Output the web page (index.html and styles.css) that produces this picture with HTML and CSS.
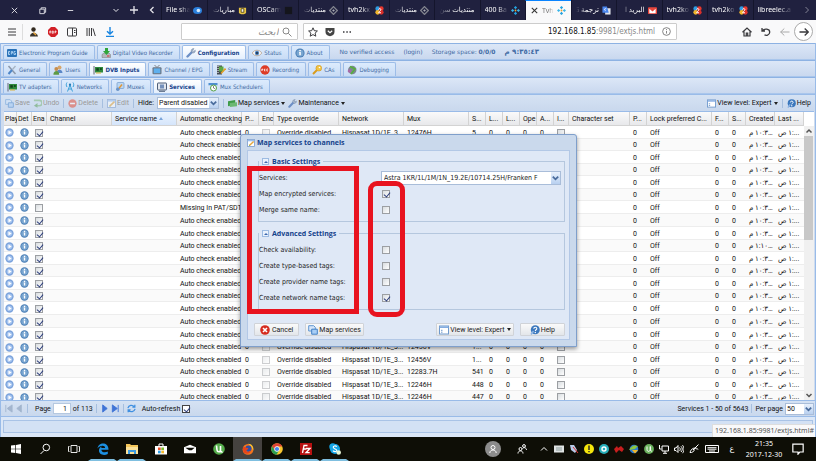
FILE: index.html
```html
<!DOCTYPE html>
<html lang="en">
<head>
<meta charset="utf-8">
<title>Tvheadend</title>
<link rel="stylesheet" href="styles.css">
</head>
<body>
<svg class="sprite" aria-hidden="true">
  <symbol id="i-chev" viewBox="0 0 10 10"><path d="M2 3.5 5 6.5 8 3.5" fill="none" stroke="#4a6c9c" stroke-width="2"/></symbol>
  <symbol id="i-play" viewBox="0 0 10 10"><circle cx="5" cy="5" r="4.6" fill="#7ba3dc"/><circle cx="5" cy="5" r="3.1" fill="#a5c4ef"/><path d="M3.8 2.7 7.4 5 3.8 7.3z" fill="#fff"/></symbol>
  <symbol id="i-info" viewBox="0 0 10 10"><circle cx="5" cy="5" r="4.6" fill="#4a7db4"/><circle cx="5" cy="5" r="3.6" fill="#78a5d0"/><path d="M4.3 2h1.5v1.3H4.3zM4 4h1.8v3.2H4.3V4.7H4z" fill="#fff"/></symbol>
  <symbol id="i-epg" viewBox="0 0 10 10"><rect y="1" width="10" height="8" rx="1" fill="#2a72b8"/><path d="M1.5 3.5v3M1.500 3.500h1.500M1.500 5h1M1.500 6.500h1.500M4.300 6.500v-3h1.200v1.600H4.300M8.500 3.500H7v3h1.500V5" stroke="#bfe0fb" stroke-width=".8" fill="none"/></symbol>
  <symbol id="i-dvr" viewBox="0 0 10 10"><path d="M1 6.500 3 5h5l1.500 1.500V9.500H1z" fill="#b4b8bd" stroke="#777" stroke-width=".5"/><path d="M4 0h3v3h2L5.500 7 2 3h2z" fill="#2fa53a"/><path d="M6 8h2.500" stroke="#d33" stroke-width="1"/></symbol>
  <symbol id="i-wrench" viewBox="0 0 10 10"><path d="M1.500 8.500 6 4" stroke="#6d8fc6" stroke-width="2.400" stroke-linecap="round"/><path d="M5.200 3.200C5 1.500 6.500.3 8 .7L6.700 2.200l1 1.200 1.600-1.200C9.700 4 8 5.500 6.200 4.800z" fill="#a9b9cf" stroke="#6b7f9d" stroke-width=".5"/></symbol>
  <symbol id="i-eye" viewBox="0 0 10 10"><path d="M.3 5C2.500 1.300 7.500 1.300 9.700 5 7.500 8.700 2.500 8.700.3 5z" fill="#fff" stroke="#a98f78" stroke-width=".7"/><circle cx="5" cy="5" r="2.200" fill="#4f83bd"/><circle cx="5" cy="5" r=".9" fill="#123"/></symbol>
  <symbol id="i-tools" viewBox="0 0 10 10"><path d="m1.500 1 7 8" stroke="#8b98aa" stroke-width="1.500"/><path d="M8.500 1 5 5" stroke="#a7b4c4" stroke-width="1.300"/><path d="M5 5 1.500 9" stroke="#4e86c8" stroke-width="2"/></symbol>
  <symbol id="i-users" viewBox="0 0 10 10"><circle cx="6.500" cy="2.500" r="2" fill="#d6a66b"/><path d="M3.500 8c0-4.500 6-4.500 6 0z" fill="#5b87c7"/><circle cx="3.300" cy="4" r="1.900" fill="#c58c4b"/><path d="M.4 9.700c0-5 5.800-5 5.800 0z" fill="#5d9a45"/></symbol>
  <symbol id="i-card" viewBox="0 0 10 10"><path d="M1 1v8.500" stroke="#667" stroke-width="1"/><rect x="2" y="2" width="8" height="5.500" fill="#2f8a3c"/><rect x="3.300" y="3.200" width="2.500" height="2.500" fill="#123f1b"/><rect x="7" y="3.200" width="1.800" height="1.600" fill="#123f1b"/><path d="M3 8h5" stroke="#d9b23c" stroke-width="1"/></symbol>
  <symbol id="i-tv" viewBox="0 0 10 10"><path d="m2.500 0 2.500 2.500L7.500 0" stroke="#666" fill="none" stroke-width=".8"/><rect x=".5" y="2.300" width="9" height="7" rx="1" fill="#6c7684"/><rect x="1.700" y="3.400" width="6.600" height="4.800" fill="#5fb0ee"/></symbol>
  <symbol id="i-film" viewBox="0 0 10 10"><rect x="1" y=".5" width="5" height="9" fill="#454b52"/><path d="M2 1.500h.01M2 3.500h.01M2 5.500h.01M2 7.500h.01" stroke="#fff" stroke-width="1" stroke-linecap="square"/><rect x="3" y="1.500" width="4.500" height="5" fill="#5da843"/><path d="m5 8.500 4.500-5" stroke="#e3a02b" stroke-width="1.600"/></symbol>
  <symbol id="i-rec" viewBox="0 0 10 10"><circle cx="5" cy="5" r="4.700" fill="#dd3b26"/><path d="M1.800 6V4h1v1h-1M4.500 4v2M4.500 4h.8M4.500 5h.8M4.500 6h.8M8 4H6.800v2H8" stroke="#fff" stroke-width=".7" fill="none"/></symbol>
  <symbol id="i-key" viewBox="0 0 10 10"><path d="M1 9 5.500 4.500" stroke="#d99b1c" stroke-width="2"/><circle cx="6.800" cy="3.200" r="2.900" fill="#f2c544" stroke="#c98a14" stroke-width=".5"/><circle cx="7.500" cy="2.500" r=".8" fill="#fff"/></symbol>
  <symbol id="i-bug" viewBox="0 0 10 10"><circle cx="5.300" cy="5" r="4.200" fill="#7d8791"/><path d="M3 1.500 8 4 4 9" stroke="#56b03c" stroke-width="1.600" fill="none"/><circle cx="2.500" cy="6" r="1.800" fill="#a66ba8"/></symbol>
  <symbol id="i-ant" viewBox="0 0 10 10"><path d="M5 3 2.500 9.500M5 3l2.500 6.500M3.500 7h3M2 .5c-1 1.500-1 3 0 4.500M8 .5c1 1.500 1 3 0 4.500" stroke="#3ba0d8" fill="none" stroke-width="1"/><circle cx="5" cy="2.700" r="1.100" fill="#2277b3"/></symbol>
  <symbol id="i-mux" viewBox="0 0 10 10"><rect x="2" y=".5" width="7" height="6" rx="1" fill="#b9d6f4" stroke="#6792c4" stroke-width=".6"/><path d="M3 7.500 7 2.500" stroke="#e39633" stroke-width="1.400"/><circle cx="2.800" cy="7.300" r="1.800" fill="#6b94c8"/></symbol>
  <symbol id="i-serv" viewBox="0 0 10 10"><rect x=".5" y="1" width="9" height="7" rx=".5" fill="#e3e7ee" stroke="#4f5f78" stroke-width="1"/><rect x="3" y="2.500" width="4" height="4" fill="#7590ba"/><path d="M2 9.300h6" stroke="#4f5f78"/></symbol>
  <symbol id="i-sched" viewBox="0 0 10 10"><rect x=".5" y="1" width="9" height="2.500" fill="#4f8fcf"/><rect x=".5" y="3.500" width="9" height="5" fill="#d8e6f5"/><circle cx="5.500" cy="6" r="3" fill="#fff" stroke="#54a046"/><path d="M5.500 4v2l1.400.7" stroke="#333" stroke-width=".6" fill="none"/></symbol>
  <symbol id="i-save" viewBox="0 0 10 10"><path d="M.7.700h5l1.600 1.600V6H.7z" fill="#d5e6fa" stroke="#5f97d2"/><path d="M3.700 4.200h5.600v5H3.700z" fill="#a8cef6" stroke="#4381c6"/></symbol>
  <symbol id="i-undo" viewBox="0 0 10 10"><path d="M1 1.500h6a2 2 0 0 1 0 6H4" stroke="#7fb87c" stroke-width="1.800" fill="none"/><path d="M5 4.500 1 7.500l4 2.300z" fill="#5fa25c"/></symbol>
  <symbol id="i-del" viewBox="0 0 10 10"><circle cx="5" cy="5" r="4.600" fill="#e5533d"/><path d="M2.300 5h5.400" stroke="#fff" stroke-width="1.700"/></symbol>
  <symbol id="i-edit" viewBox="0 0 10 10"><rect x=".6" y=".6" width="8.800" height="8.800" fill="#fff" stroke="#7a9ccb"/><path d="M1 2h8" stroke="#9dc0ee" stroke-width="1.800"/><path d="M3 8 8.300 3" stroke="#e5a63a" stroke-width="1.800"/><path d="m2.500 8.700.5-1.400 1 .9z" fill="#6a4"/></symbol>
  <symbol id="i-map" viewBox="0 0 10 10"><path d="M0 2.500 8 1v5L0 8z" fill="#3e9a48"/><path d="m2 4.500 8-1v4.500L2 9z" fill="#6bb873"/></symbol>
  <symbol id="i-view" viewBox="0 0 10 10"><rect x=".5" y="1" width="9" height="8" fill="#fff" stroke="#6f99cc"/><path d="M.5 2.200h9" stroke="#7fa9e0" stroke-width="1.500"/><path d="M2 5.300h1.500M2 7.200h1.500" stroke="#6f99cc"/></symbol>
  <symbol id="i-help" viewBox="0 0 10 10"><circle cx="5.300" cy="4.800" r="4.500" fill="#3a77bd"/><path d="M3.800 3.800c0-2 3-2 3 0 0 1-1.500 1-1.500 2.200" stroke="#fff" stroke-width="1.100" fill="none"/><circle cx="5.300" cy="7.500" r=".7" fill="#fff"/><path d="M1 9.500 3.500 6" stroke="#8bb3e3" stroke-width="1.600"/></symbol>
  <symbol id="i-cancel" viewBox="0 0 10 10"><circle cx="5" cy="5" r="4.800" fill="#d62c1f"/><path d="m3 3 4 4M7 3 3 7" stroke="#fff" stroke-width="1.600"/></symbol>
  <symbol id="i-kodi" viewBox="0 0 10 10"><path d="m5 0 1.800 1.800L5 3.600 3.200 1.800zM5 6.400l1.800 1.800L5 10 3.200 8.200z" fill="#22a2df"/><path d="m1.800 3.200 1.800 1.800-1.800 1.800L0 5zM8.200 3.200 10 5 8.200 6.800 6.400 5z" fill="#38b6ea"/><circle cx="5" cy="5" r="1" fill="#f0a02c"/></symbol>
  <symbol id="i-kodig" viewBox="0 0 10 10"><path d="m5 .7 4.300 4.300L5 9.300.7 5z" fill="none" stroke="#83858f" stroke-width="1.500"/><path d="m5 3.500 1.500 1.500L5 6.500 3.500 5z" fill="#a9abb3"/></symbol>
  <symbol id="i-tvh" viewBox="0 0 10 10"><circle cx="3" cy="3" r="2.600" fill="#2f9de2"/><circle cx="7" cy="3" r="2.600" fill="#e8372d"/><circle cx="3" cy="7" r="2.600" fill="#efb52d"/><circle cx="7" cy="7" r="2.600" fill="#d92f2a"/><path d="M4 4c0-1.500 2.500-1.500 2.500 0S4 6.500 4 7.500h2.700" stroke="#fff" stroke-width="1.100" fill="none"/></symbol>
</svg>

<header class="chrome-tabs">
  <div class="win-controls">
    <button aria-label="Close"><svg viewBox="0 0 10 10"><path d="m2 2 6 6M8 2 2 8"/></svg></button>
    <button aria-label="Restore"><svg viewBox="0 0 10 10"><path d="M2 3.500h5v5H2zM3.500 3.500V2h5v5H7"/></svg></button>
    <button aria-label="Minimize"><svg viewBox="0 0 10 10"><path d="M2 5h6"/></svg></button>
  </div>
  <div class="tab-controls">
    <button aria-label="List all tabs"><svg viewBox="0 0 10 10"><path d="m2.500 4 2.500 2.500L7.500 4"/></svg></button>
    <button aria-label="New tab"><svg viewBox="0 0 10 10"><path d="M5 1v8M1 5h8" stroke-width="1.300"/></svg></button>
    <button aria-label="Scroll tabs"><svg viewBox="0 0 10 10"><path d="M6.500 2 3.500 5l3 3" stroke-width="1.300"/></svg></button>
  </div>
  <nav class="btabs">
    <button class="btab"><span>File sha</span><svg viewBox="0 0 10 10"><ellipse cx="5" cy="5" rx="5" ry="4" fill="#2b7fdb"/><circle cx="6" cy="5" r="2" fill="#d4e9fb"/></svg></button>
    <button class="btab rtl"><span>مباريات</span><svg viewBox="0 0 10 10"><path d="M1 1h8v5c0 3-8 3-8 0z" fill="#e8c545" transform="translate(0 1)"/><path d="M3.500 3h3v4h-3z" fill="#efefef" stroke="#5c4d14"/></svg></button>
    <button class="btab"><span>OSCam</span><svg viewBox="0 0 10 10"><rect x="1" y="1" width="8" height="8" fill="#14151c"/></svg></button>
    <button class="btab rtl"><span>منتديات</span><svg><use href="#i-kodig"/></svg></button>
    <button class="btab"><span>tvh2kx</span><svg><use href="#i-tvh"/></svg></button>
    <button class="btab rtl"><span>منتديات</span><svg><use href="#i-kodig"/></svg></button>
    <button class="btab rtl"><span>منتديات سن</span></button>
    <button class="btab"><span>400 Ba</span><svg><use href="#i-kodi"/></svg></button>
    <button class="btab active"><svg viewBox="0 0 10 10"><path d="m2 2 6 6M8 2 2 8" stroke="#333" stroke-width="1.200"/></svg><span>Tvh</span><svg><use href="#i-kodi"/></svg></button>
    <button class="btab rtl"><span>ترجمة G</span><svg viewBox="0 0 10 10"><rect x="3.500" y="2.500" width="6" height="7" fill="#dfe3ea"/><path d="M.5.500h5l2 7h-7z" fill="#4a86ee"/><path d="M4.700 3H3.300a1 1 0 1 0 1 1.700" stroke="#fff" fill="none" stroke-width=".8"/></svg></button>
    <button class="btab rtl"><span>البريد ا</span><svg viewBox="0 0 10 10"><rect y="1.500" width="10" height="7.500" rx="1" fill="#e6453c"/><path d="M1.500 3v5h7V3L5 6z" fill="#fff"/></svg></button>
    <button class="btab"><span>tvh2ko</span><svg><use href="#i-tvh"/></svg></button>
    <button class="btab"><span>tvh2ko</span><svg><use href="#i-tvh"/></svg></button>
    <button class="btab"><span>libreelec.a</span></button>
  </nav>
  <button class="tab-more" aria-label="More tabs"><svg viewBox="0 0 10 10"><path d="m3.500 2 3 3-3 3"/></svg></button>
</header>

<div class="navbar">
  <div class="nav-left">
    <button aria-label="Menu"><svg viewBox="0 0 10 10"><path d="M1 2h8M1 5h8M1 8h8"/></svg></button>
    <i class="vline"></i>
    <button aria-label="User agent"><svg viewBox="0 0 10 10"><circle cx="4.500" cy="2.500" r="2.200" fill="#332a20" stroke="none"/><path d="M1 9.500c0-5 7-5 8 0z" fill="#3a352c" stroke="none"/><path d="M4.500 5.500 7 8" stroke="#e9a53a" stroke-width="1.500"/></svg></button>
    <button aria-label="Adblock"><svg viewBox="0 0 10 10"><path d="M3 0h4l3 3v4l-3 3H3L0 7V3z" fill="#d21f26" stroke="none"/><path d="M1.800 6.300V4h1v2.300M4.300 6.300V4h1v2.300zM7 6.300V4h1v1.200H7" stroke="#fff" stroke-width=".7"/></svg></button>
    <button aria-label="Sidebar"><svg viewBox="0 0 10 10"><rect x=".5" y="1" width="9" height="8" rx="1"/><path d="M5.500 1v8M7 3.500h1.500M7 5.500h1.500"/></svg></button>
    <button aria-label="Library"><svg viewBox="0 0 10 10"><path d="M1 1v8M3.300 1v8M5.500 1v8M7 1.500 9.300 9"/></svg></button>
    <button aria-label="Downloads"><svg viewBox="0 0 10 10"><path d="M5 0v7M2 4.200 5 7l3-2.800M1 9.400h8" stroke="#1684e0" stroke-width="1.400"/></svg></button>
  </div>
  <label class="search"><input type="search" dir="rtl" placeholder="ابحث" aria-label="Search"><svg viewBox="0 0 10 10"><circle cx="4" cy="4" r="3"/><path d="m6.300 6.300 3.200 3.200"/></svg></label>
  <div class="urlbar">
    <svg viewBox="0 0 10 10"><path d="m5 .8 1.300 2.900 3.100.3-2.300 2.100.7 3.100L5 7.600 2.200 9.200l.7-3.100L.6 4l3.100-.3z"/></svg>
    <svg viewBox="0 0 10 10"><path d="M.5 1h9v4c0 5.500-9 5.500-9 0z" fill="#444" stroke="none"/><path d="m2.800 3.700 2.200 2 2.200-2" stroke="#fff" stroke-width="1.200"/></svg>
    <svg viewBox="0 0 10 10"><path d="M1 5h1.500M4.300 5h1.500M7.500 5H9" stroke-width="1.600"/></svg>
    <span class="url"><b>192.168.1.85</b>:9981/extjs.html</span>
    <svg viewBox="0 0 10 10" class="grey"><circle cx="5" cy="5" r="4.300"/><path d="M5 4.300v3M5 2.300v1"/></svg>
  </div>
  <div class="nav-right">
    <button aria-label="Home"><svg viewBox="0 0 10 10"><path d="M.5 5.300 5 1l4.500 4.300M2 4.500V9h6V4.500M4.300 9V6h1.400v3" stroke-width="1.200"/></svg></button>
    <button aria-label="Reload"><svg viewBox="0 0 10 10"><path d="M1 1v3h3M1.300 4C3 1 9 1.500 8.700 5.300 8.500 8.500 5 9 3.500 7.800" stroke-width="1.300"/></svg></button>
    <button aria-label="Back" class="dim"><svg viewBox="0 0 10 10"><path d="M9.500 5h-9M4.300 1.500.700 5l3.600 3.500"/></svg></button>
    <button aria-label="Forward" class="round"><svg viewBox="0 0 10 10"><path d="M.5 5h9M5.700 1.500 9.300 5 5.700 8.500" stroke-width="1.300"/></svg></button>
  </div>
</div>

<main class="app">
  <nav class="strip">
    <button class="tab"><svg><use href="#i-epg"/></svg>Electronic Program Guide</button>
    <button class="tab"><svg><use href="#i-dvr"/></svg>Digital Video Recorder</button>
    <button class="tab on"><svg><use href="#i-wrench"/></svg>Configuration</button>
    <button class="tab"><svg><use href="#i-eye"/></svg>Status</button>
    <button class="tab"><svg><use href="#i-info"/></svg>About</button>
    <div class="session"><span>No verified access</span><a href="#">(login)</a><span>Storage space: <b>0/0/0</b></span><b class="now"><bdi>م</bdi> <bdi>٩:٣٥:٤٣</bdi></b></div>
  </nav>
  <nav class="strip">
    <button class="tab"><svg><use href="#i-tools"/></svg>General</button>
    <button class="tab"><svg><use href="#i-users"/></svg>Users</button>
    <button class="tab on"><svg><use href="#i-card"/></svg>DVB Inputs</button>
    <button class="tab"><svg><use href="#i-tv"/></svg>Channel / EPG</button>
    <button class="tab"><svg><use href="#i-film"/></svg>Stream</button>
    <button class="tab"><svg><use href="#i-rec"/></svg>Recording</button>
    <button class="tab"><svg><use href="#i-key"/></svg>CAs</button>
    <button class="tab"><svg><use href="#i-bug"/></svg>Debugging</button>
  </nav>
  <nav class="strip">
    <button class="tab"><svg><use href="#i-card"/></svg>TV adapters</button>
    <button class="tab"><svg><use href="#i-ant"/></svg>Networks</button>
    <button class="tab"><svg><use href="#i-mux"/></svg>Muxes</button>
    <button class="tab on"><svg><use href="#i-serv"/></svg>Services</button>
    <button class="tab"><svg><use href="#i-sched"/></svg>Mux Schedulers</button>
  </nav>

  <div class="toolbar">
    <button class="tool" disabled><svg><use href="#i-save"/></svg>Save</button>
    <button class="tool" disabled><svg><use href="#i-undo"/></svg>Undo</button>
    <i class="sep"></i>
    <button class="tool" disabled><svg><use href="#i-del"/></svg>Delete</button>
    <i class="sep"></i>
    <button class="tool" disabled><svg><use href="#i-edit"/></svg>Edit</button>
    <i class="sep"></i>
    <label class="tool" for="hide">Hide:</label>
    <span class="combo hide-combo"><select id="hide"><option>Parent disabled</option></select><svg><use href="#i-chev"/></svg></span>
    <i class="sep"></i>
    <button class="tool"><svg><use href="#i-map"/></svg>Map services<i class="caret"></i></button>
    <button class="tool"><svg><use href="#i-wrench"/></svg>Maintenance<i class="caret"></i></button>
    <span class="grow"></span>
    <button class="tool"><svg><use href="#i-view"/></svg>View level: Expert<i class="caret"></i></button>
    <i class="sep"></i>
    <button class="tool"><svg><use href="#i-help"/></svg>Help</button>
  </div>

  <section class="grid">
    <table>
      <colgroup>
        <col class="c-tiny"><col class="c-icon"><col class="c-icon"><col class="c-wide"><col class="c-wide"><col class="c-wide">
        <col class="c-num"><col class="c-icon"><col class="c-wide"><col class="c-wide"><col class="c-wide">
        <col class="c-num"><col class="c-num"><col class="c-num"><col class="c-num"><col class="c-num"><col class="c-icon">
        <col><col class="c-num"><col class="c-wide"><col class="c-num"><col class="c-num"><col class="c-date"><col class="c-date">
      </colgroup>
      <thead><tr>
        <th>Play</th><th>Det</th><th>Ena</th><th>Channel</th><th class="sorted">Service name <i class="asc"></i></th><th>Automatic checking</th>
        <th>P...</th><th>Enc</th><th>Type override</th><th>Network</th><th>Mux</th>
        <th>S...</th><th>L...</th><th>L...</th><th>Ope</th><th>A...</th><th>I...</th>
        <th>Character set</th><th>P...</th><th>Lock preferred C...</th><th>F...</th><th>S...</th><th>Created</th><th>Last ...</th>
      </tr></thead>
      <tbody id="services"></tbody>
    </table>
    <div class="scroll"><svg viewBox="0 0 10 10"><path d="M2.500 6.500 5 4l2.500 2.500"/></svg><i></i><svg viewBox="0 0 10 10"><path d="M2.500 4 5 6.500 7.500 4"/></svg></div>
  </section>

  <div class="paging">
    <button class="pg off" aria-label="First"><svg viewBox="0 0 10 10"><path d="M2 1v8M9 1v8L3.500 5z"/></svg></button>
    <button class="pg off" aria-label="Previous"><svg viewBox="0 0 10 10"><path d="M7 1v8L2 5z"/></svg></button>
    <i class="sep"></i>
    <label class="page-label" for="page">Page</label><input id="page" type="text" value="1"><span>of 113</span>
    <i class="sep"></i>
    <button class="pg" aria-label="Next"><svg viewBox="0 0 10 10"><path d="M3 1v8l5-4z"/></svg></button>
    <button class="pg" aria-label="Last"><svg viewBox="0 0 10 10"><path d="M1.500 1v8L7 5zM8 1v8"/></svg></button>
    <i class="sep"></i>
    <button class="pg" aria-label="Refresh"><svg viewBox="0 0 10 10"><path d="M1 4.500C2 1 6 .5 8 3M9 5.500C8 9 4 9.500 2 7M8.700.800V3.500H6M1.300 9.200V6.500H4" fill="none" stroke="#3f8fe0" stroke-width="1.400"/></svg></button>
    <label class="auto" for="auto">Auto-refresh</label><input id="auto" type="checkbox" class="plain" checked>
    <span class="grow"></span>
    <span>Services 1 - 50 of 5643</span>
    <i class="sep"></i>
    <label for="per">Per page</label>
    <span class="combo per-combo"><select id="per"><option>50</option></select><svg><use href="#i-chev"/></svg></span>
  </div>
  <div class="status"><div></div><span class="hover-url">192.168.1.85:9981/extjs.html#</span></div>

  <form class="dialog" role="dialog" aria-labelledby="dlg-title">
    <h2 id="dlg-title"><svg><use href="#i-edit"/></svg>Map services to channels</h2>
    <div class="dlg-body">
      <fieldset>
        <legend><i class="fold"></i>Basic Settings</legend>
        <div class="row"><label for="svc">Services:</label><span class="combo svc-combo"><select id="svc"><option>Astra 1KR/1L/1M/1N_19.2E/10714.25H/Franken F</option></select><svg><use href="#i-chev"/></svg></span></div>
        <div class="row"><label for="enc">Map encrypted services:</label><input type="checkbox" id="enc" checked></div>
        <div class="row"><label for="merge">Merge same name:</label><input type="checkbox" id="merge"></div>
      </fieldset>
      <fieldset>
        <legend><i class="fold"></i>Advanced Settings</legend>
        <div class="row"><label for="avail">Check availability:</label><input type="checkbox" id="avail"></div>
        <div class="row"><label for="type">Create type-based tags:</label><input type="checkbox" id="type"></div>
        <div class="row"><label for="prov">Create provider name tags:</label><input type="checkbox" id="prov"></div>
        <div class="row"><label for="net">Create network name tags:</label><input type="checkbox" id="net" checked></div>
      </fieldset>
      <div class="dlg-foot">
        <button type="button" class="roomy"><svg><use href="#i-cancel"/></svg>Cancel</button>
        <button type="button"><svg><use href="#i-save"/></svg>Map services</button>
        <span class="grow"></span>
        <button type="button"><svg><use href="#i-view"/></svg>View level: Expert<i class="caret"></i></button>
        <button type="button" class="help"><svg><use href="#i-help"/></svg>Help</button>
      </div>
    </div>
    <i class="mark mark-labels"></i>
    <i class="mark mark-checks"></i>
  </form>
</main>

<footer class="taskbar">
  <button aria-label="Start"><svg viewBox="0 0 12 12"><path d="M1 2.500 5.300 2v3.700H1zM6 1.900 11 1v4.700H6zM1 6.300h4.300V10L1 9.500zM6 6.300h5V11l-5-.9z" fill="#fff"/></svg></button>
  <button aria-label="Search"><svg viewBox="0 0 12 12"><path d="M1.500 11 5 7.500" stroke="#fff"/><circle cx="7.300" cy="4.500" r="3.300" fill="none" stroke="#fff"/></svg></button>
  <button aria-label="Task view"><svg viewBox="0 0 12 12"><path d="M3 2.500h6v7H3zM1.500 3.500h-1v5h1M10.500 3.500h1v5h-1" fill="none" stroke="#fff" stroke-width=".9"/></svg></button>
  <button aria-label="Edge" class="run"><svg viewBox="0 0 12 12"><path d="M.5 5.500C1.200-1.500 11.800-1.500 11.500 6.800H4.300c.2 2.700 4 3.200 6.500 1.700v2.600C6 13.300 1.500 11 2 7c.2-1.800 1.300-3 3-3.600-.6.700-.8 1-.8 1.700h3.900C8.100 1.500 2.500 2.300.5 5.500z" fill="#1c8fe0"/></svg></button>
  <button aria-label="Explorer" class="run"><svg viewBox="0 0 12 12"><path d="M0 1h4l1 1h7v9H0z" fill="#f4c65a"/><path d="M0 4h12v7H0z" fill="#fbe29a"/><path d="M2 7h8v4H8V9H4v2H2z" fill="#3d9be0"/></svg></button>
  <button aria-label="Store"><svg viewBox="0 0 12 12"><path d="M4 3V1h4v2" fill="none" stroke="#fff"/><path d="M0 3h12v8.500H0z" fill="#fff"/><path d="M3 4.500h2.700v2.600H3z" fill="#e8502c"/><path d="M6.300 4.500H9v2.600H6.300z" fill="#7fba2b"/><path d="M3 7.700h2.700v2.600H3z" fill="#2c9fe8"/><path d="M6.300 7.700H9v2.600H6.300z" fill="#f5b82a"/></svg></button>
  <button aria-label="Mail"><svg viewBox="0 0 14 12"><path d="M0 4 7 1l7 3v7H0z" fill="#fff"/><path d="M1.500 4.500h11L9 7.500H6z" fill="#0d0d06"/></svg></button>
  <button aria-label="uTorrent"><svg viewBox="0 0 12 12"><circle cx="6" cy="6" r="5.800" fill="#56ad4c"/><path d="M3.500 2.500 4 7c.3 2.500 3.500 2.300 3.500 0V3v4.500c.2 1.500 1.500 1.500 2 1.200" fill="none" stroke="#fff" stroke-width="1.600"/></svg></button>
  <button aria-label="Firefox" class="run lit"><svg viewBox="0 0 14 14"><circle cx="7" cy="7.500" r="6.300" fill="#f2731d"/><path d="M7 1c5 0 7 4 6 8-1.500-3-2-5-6-8z" fill="#fbc02d"/><circle cx="7.500" cy="6.500" r="3.600" fill="#2b4fa8"/><path d="M1 5c2-1 3 0 4 .6l2.500.2C7 8 5 8 5 9.500c1.500 1.500 4 1 5-.5 0 4-7 5-8.500 1z" fill="#e5441c"/></svg></button>
  <button aria-label="Chrome" class="run"><svg viewBox="0 0 12 12"><circle cx="6" cy="6" r="5.800" fill="#f7c62f"/><path d="M1 3.200A5.800 5.800 0 0 1 11.200 3.500H6L3.600 7.200z" fill="#de4436"/><path d="M1 3.200A5.800 5.800 0 0 0 5.500 11.800L8 7.500H4z" fill="#2c9e52"/><circle cx="6" cy="6" r="2.700" fill="#fff"/><circle cx="6" cy="6" r="2.100" fill="#4585ee"/></svg></button>
  <button aria-label="FileZilla" class="run"><svg viewBox="0 0 12 12"><rect width="12" height="12" fill="#b71010"/><path d="M2.500 10 4 2.500h3.500M3.300 6h3M6 5.500h4L6 9.700h3.700" fill="none" stroke="#fff" stroke-width="1.300"/></svg></button>
  <button aria-label="Skype" class="run"><svg viewBox="0 0 12 12"><circle cx="3.800" cy="3.800" r="3.500" fill="#14a6e8"/><circle cx="6" cy="6" r="5" fill="#14a6e8"/><path d="M7.800 3.700C6.500 2.300 4 3 4.300 4.500S8 6 7.800 7.500 5 9 4 7.700" stroke="#fff" stroke-width="1.200" fill="none"/><circle cx="9.700" cy="9.500" r="2.300" fill="#e7f5d5"/></svg></button>
  <span class="grow"></span>
  <div class="people"><span class="avatar"><svg viewBox="0 0 10 10"><circle cx="5" cy="3.500" r="2"/><path d="M1.800 9c0-4 6.400-4 6.400 0"/></svg></span>
  <svg viewBox="0 0 10 10"><circle cx="3.500" cy="5" r="1.500"/><path d="M1 9.500c0-3.500 5-3.500 5 0"/><circle cx="7" cy="2" r="1.400"/><path d="M5.500 4.500c1-1.500 4-1 4 1.500"/></svg></div>
  <div class="tray">
    <svg viewBox="0 0 10 10"><path d="M2 6.500 5 3.500l3 3"/></svg>
    <svg viewBox="0 0 10 10"><rect y="1.500" width="10" height="7" fill="#dfe3e3" stroke="none"/><path d="M2 4h6M2 6h6" stroke="#8a9a9a"/></svg>
    <svg viewBox="0 0 10 10"><path d="M1 1h4l3 5-2 3-4-3z" fill="#b9cbe8" stroke="none"/><path d="m4 3 5 6" stroke="#d33"/></svg>
    <svg viewBox="0 0 10 10"><circle cx="5" cy="5" r="5" fill="#f6e60c" stroke="none"/><path d="M5 1.500v4.500M5 7v1.300" stroke="#222" stroke-width="1.400"/></svg>
    <svg viewBox="0 0 10 10"><circle cx="5" cy="5" r="5" fill="#27aeb9" stroke="none"/><circle cx="5" cy="5" r="2" fill="#27aeb9" stroke="#fff" stroke-width="1.400"/></svg>
    <svg viewBox="0 0 10 10"><path d="M0 5 3 2l1 2 3-2 3 3-2 3-3-2-3 3z" fill="#c81e1e" stroke="none"/></svg>
    <svg viewBox="0 0 10 10"><circle cx="5" cy="5" r="4.300" fill="#2f7dd1" stroke="none"/><path d="M0 6c3-5 6-5 9-4L6 5z" fill="#8cc63e" stroke="none"/><path d="M3 6h6L6 9.500z" fill="#f2b72b" stroke="none"/></svg>
    <svg viewBox="0 0 10 10"><circle cx="5" cy="5" r="4.900" fill="#6cb35f" stroke="none"/><path d="M3 2.500v3c0 2.500 3 2.500 3.300 0v-3 3.500c.2 1 1 1.300 1.700 1"/></svg>
    <svg viewBox="0 0 10 10"><path d="M3 2h6.500v5H3zM6 7v2M4 9.300h4M.5 1v4h2"/></svg>
    <svg viewBox="0 0 10 10"><path d="M.5 4v2.500h1.500l2 2v-7L2 4zM5.500 3.500c1 1 1 2.500 0 3.500M7 2.300c1.700 1.700 1.700 4 0 5.700M8.500 1.200c2 2.500 2 5.500 0 8"/></svg>
    <svg viewBox="0 0 10 10"><path d="M9.500.500 4 6M8 5.500c-2-3-6-1-7 3 2 .5 4-1 4.500-3M7 3.500l2 2"/></svg>
    <svg class="kbd" viewBox="0 0 14 10"><path d="M.5 1.500h13v7H.5zM2.500 3.700h9M2.500 5.200h9M4 7h6" /></svg>
  </div>
  <span class="lang">ع</span>
  <time class="clock"><span>21:35</span><span>2017-12-30</span></time>
  <button class="note" aria-label="Notifications"><svg viewBox="0 0 10 10"><path d="M.7 1h8.600v6.500H6.500L5 9.300V7.500H.7z" fill="none" stroke="#fff"/></svg></button>
</footer>
<script src="app.js"></script>
</body>
</html>
```
FILE: styles.css
```css
* { box-sizing: border-box; }
body {
  margin: 0; height: 100vh; display: flex; flex-direction: column; overflow: hidden;
  font: 7px/10px Roboto, "Noto Sans", "DejaVu Sans", sans-serif; color: #111; background: #dfe8f6;
}
button, input, select { font: inherit; color: inherit; margin: 0; padding: 0; border: 0; background: none; }
button { display: flex; align-items: center; justify-content: center; white-space: nowrap; }
svg { width: 10px; height: 10px; flex: none; display: block; }
.sprite { position: absolute; width: 0; height: 0; }
.grow { flex: 1; }

/* browser tabs */
.chrome-tabs { height: 20px; flex: none; display: flex; background: #20213f; color: #fff; }
.chrome-tabs svg { fill: none; stroke: #e4e4ea; stroke-width: 1; }
.chrome-tabs svg:has(use) { stroke: none; }
.win-controls, .tab-controls { display: flex; align-items: center; }
.win-controls { width: 107px; }
.win-controls button { width: 28px; }
.win-controls svg { width: 9px; height: 9px; }
.tab-controls { width: 54px; }
.tab-controls button { width: 18px; }
.btabs { flex: 1; display: flex; }
.btab { flex: 1 1 0; min-width: 0; gap: 3px; padding: 0 5px 0 4px; border-left: 1px solid #14152c; justify-content: space-between; color: #fff; font: 7px/12px "Noto Sans", "DejaVu Sans", sans-serif; }
.btab span { flex: 1; min-width: 0; overflow: hidden; text-align: left; mask-image: linear-gradient(90deg, #000 55%, transparent); }
.btab.rtl span { text-align: right; direction: rtl; mask-image: linear-gradient(270deg, #000 55%, transparent); }
.btab svg { width: 9px; height: 9px; stroke: none; }
.btab.active { background: #f9f9fa; color: #777; border-top: 1px solid #0a84ff; }
.tab-more { width: 18px; opacity: .5; }

/* address bar */
.navbar { height: 23px; flex: none; display: flex; align-items: center; background: #f9f9fa; }
.navbar svg { fill: none; stroke: #3a3a3d; stroke-width: 1; }
.nav-left { display: flex; align-items: center; width: 181px; padding-left: 2px; }
.nav-left button { width: 19px; height: 18px; }
.vline { width: 1px; height: 16px; background: #ddd; margin: 0 1px; }
.search { width: 117px; height: 17px; display: flex; align-items: center; gap: 3px; padding: 0 5px; background: #fff; border: 1px solid #ccc; border-radius: 1px; }
.search input { flex: 1; min-width: 0; font: italic 9px/14px "Noto Sans", "DejaVu Sans", sans-serif; outline: 0; }
.search input::placeholder { color: #888; opacity: 1; }
.search svg { stroke: #888; }
.urlbar { flex: 1; height: 17px; margin: 0 60px 0 5px; display: flex; align-items: center; gap: 7px; padding: 0 5px 0 4px; background: #fff; border: 1px solid #ccc; border-radius: 1px; }
.url { flex: 1; text-align: right; font: 8px/12px "DejaVu Sans Condensed", "Noto Sans", sans-serif; color: #888; }
.url b { font-weight: 400; color: #111; }
.urlbar .grey { stroke: #777; width: 9px; height: 9px; }
.nav-right { display: flex; align-items: center; }
.nav-right button { width: 19px; height: 19px; }
.nav-right .dim svg { stroke: #aaa; }
.nav-right .round { border: 1px solid #aaa; border-radius: 50%; margin-right: 3px; background: #fff; }

/* application panel */
.app { flex: 1; min-height: 0; display: flex; flex-direction: column; position: relative; background: #cfdcee; border: 0 solid #99bbe8; border-width: 0 1px; }
.strip { height: 17px; flex: none; display: flex; align-items: flex-end; gap: 2px; padding: 0 2px 1px; background: linear-gradient(#dce7f7, #c8d7ee); border-top: 1px solid #8db2e3; box-shadow: inset 0 -1px #a9c6ec; }
.tab { height: 14px; gap: 2px; padding: 0 6px 0 3px; background: linear-gradient(#dcebfd, #c9dcf5); border: 1px solid #9dbde8; border-bottom: 0; border-radius: 2px 2px 0 0; color: #416aa3; font: 6px/12px "DejaVu Sans Condensed", "DejaVu Sans", sans-serif; }
.tab.on { background: linear-gradient(#fff, #e4effd); color: #15428b; font-weight: 700; }
.session { display: flex; align-self: center; gap: 9px; padding-left: 8px; color: #416aa3; font: 6px/12px "DejaVu Sans", sans-serif; white-space: nowrap; }
.session a { color: inherit; text-decoration: none; }
.session .now { font-size: 7px; }

.toolbar, .paging { display: flex; align-items: center; flex: none; white-space: nowrap; background: linear-gradient(#d5e2f3, #c9d8ed); }
.toolbar { height: 17px; padding: 0 4px; gap: 3px; border-top: 1px solid #99bbe8; }
.tool { gap: 1px; }
.tool:disabled { color: #999; }
.tool:disabled svg { opacity: .55; }
.tool svg { width: 9px; height: 9px; }
.sep { width: 1px; height: 9px; background: #a6bfdf; margin: 0 1px; }
.toolbar .sep { margin: 0 1px; }
.caret { border: 2px solid transparent; border-top: 3px solid #222; border-bottom: 0; margin-left: 1px; }
.combo { display: flex; position: relative; height: 12px; background: #fff; border: 1px solid #a9bdd9; }
.combo select { width: 100%; appearance: none; padding: 0 9px 0 1px; outline: 0; }
.combo svg { position: absolute; right: 0; top: 0; width: 9px; height: 100%; background: linear-gradient(#e7f0fc, #b8d0f0); pointer-events: none; }
.hide-combo { width: 62px; }
.per-combo { width: 29px; }

/* services grid */
.grid { flex: 1; min-height: 0; display: flex; overflow: hidden; margin: 0 1px 0 3px; background: #fff; border-top: 1px solid #99bbe8; }
table { flex: 1; min-width: 0; width: 100%; table-layout: fixed; border-collapse: collapse; align-self: flex-start; }
.c-tiny { width: 13px; } .c-icon { width: 15px; } .c-num { width: 17px; } .c-wide { width: 65px; } .c-date { width: 29px; }
th, td { padding: 0 2px 0 3px; overflow: hidden; white-space: nowrap; text-align: left; font-weight: 400; line-height: 10px; }
th { height: 14px; padding: 0 0 0 3px; background: linear-gradient(#fafafa, #e6e7ea); box-shadow: inset -1px -1px #d3d3d3; }
th:first-child, td:first-child { padding-left: 1px; }
th:nth-child(-n + 3) { padding-left: 1px; }
td { text-overflow: ellipsis; }
td:nth-child(6), td:nth-child(10) { padding-right: 0; }
th.sorted { background: linear-gradient(#ecf4fe, #d3e4fb); }
.asc { display: inline-block; border: 2px solid transparent; border-bottom: 3px solid #7aa3d8; border-top: 0; margin-bottom: 1px; }
tbody tr td { height: 13px; }
tbody tr:nth-child(even) td { height: 12px; background: #fafafa; }
tbody tr:nth-child(8n) td { height: 13px; }
td { box-shadow: inset 0 -1px #ededed; }
td svg { width: 9px; height: 9px; }
td.ico { text-overflow: clip; padding-right: 0; }
input[type=checkbox] { appearance: none; display: block; width: 8px; height: 8px; flex: none; border: 1px solid #9c9fa3; background: linear-gradient(135deg, #d9dde0, #fff); position: relative; }
input[type=checkbox]:checked::after { content: ""; position: absolute; left: 2px; top: 0; width: 3px; height: 5px; border: solid #2e3f7d; border-width: 0 1px 1px 0; transform: rotate(40deg); }
input.faint { opacity: .5; }
.scroll { width: 10px; flex: none; margin-top: 14px; display: flex; flex-direction: column; background: #f0f0f0; }
.scroll svg { fill: none; stroke: #555; stroke-width: 1.5; }
.scroll i { height: 104px; background: #c8c8c8; margin: 0 1px 0 0; }
.scroll svg:last-child { margin-top: auto; }

.paging { height: 17px; padding: 0 1px 0 3px; gap: 2px; border: 1px solid #99bbe8; border-width: 1px 0; }
.pg svg { width: 9px; height: 9px; fill: #3f74d6; stroke: #3f74d6; stroke-width: 1; }
.pg.off svg { fill: #a3b5ce; stroke: #a3b5ce; }
.page-label, .auto { margin-left: 4px; }
.paging #page { width: 18px; height: 11px; text-align: right; padding-right: 3px; background: #fff; border: 1px solid #b5c8e0; }
input.plain { background: #fff; border-color: #444; }
.status { height: 20px; flex: none; position: relative; padding: 3px 2px; background: #dbe7f7; }
.status div { height: 13px; border: 1px solid #a9c3e6; background: #d3e1f4; }
.hover-url { position: absolute; right: 0; bottom: 0; padding: 1px 1px 1px 2px; background: #f9f9fa; color: #555; border: 1px solid #ddd; border-width: 1px 0 0 1px; font: 7px/10px "Noto Sans", sans-serif; }

/* dialog */
.dialog { position: absolute; left: 239px; top: 91px; width: 337px; margin: 0; padding: 0 6px 6px; background: #cad9ec; border: 1px solid #7f9fcb; border-radius: 3px 3px 0 0; box-shadow: 0 2px 4px rgba(0, 0, 0, .4); font: 7px/10px "DejaVu Sans Condensed", "DejaVu Sans", sans-serif; color: #222; }
.dialog h2 { margin: 0; height: 15px; display: flex; align-items: center; gap: 2px; font: 700 7px/10px "Open Sans", sans-serif; color: #15428b; }
.dialog h2 svg { width: 8px; height: 8px; }
.dlg-body { padding: 5px 4px 3px 10px; background: #dfe8f6; border: 1px solid #b3c8e6; }
fieldset { margin: 0; padding: 3px 3px 3px 0; border: 1px solid #b5c7de; min-width: 0; }
fieldset + fieldset { margin-top: 6px; }
legend { display: flex; align-items: center; gap: 3px; padding: 0 3px; font: 700 7px/11px "Open Sans", sans-serif; color: #15428b; }
.fold { width: 7px; height: 7px; border: 1px solid #9dbbe2; background: #eaf2fd; display: grid; place-items: center; }
.fold::after { content: ""; border: 2px solid transparent; border-top: 0; border-bottom: 2px solid #3c67ad; }
.row { display: flex; align-items: center; height: 16px; }
.row label { width: 122px; }
.row input { margin-left: 1px; }
.svc-combo { flex: 1; height: 14px; }
.svc-combo select { padding-left: 2px; }
.dlg-foot { display: flex; gap: 6px; margin: 13px 0 0 -4px; }
.dlg-foot button { height: 13px; gap: 1px; padding: 0 2px; background: linear-gradient(#fafafa, #e3e6ea); border: 1px solid #d0d3d8; border-radius: 1px; font: 7px/10px Roboto, sans-serif; }
.dlg-foot .roomy { padding: 0 5px; gap: 2px; }
.dlg-foot .help { padding: 0 9px; }
.mark { position: absolute; border: 5px solid #e8131f; pointer-events: none; }
.mark-labels { left: 6px; top: 31px; width: 112px; height: 148px; }
.mark-checks { left: 127px; top: 46px; width: 37px; height: 136px; border-radius: 9px; }

/* taskbar */
.taskbar { height: 24px; flex: none; display: flex; align-items: stretch; padding-left: 1px; background: #0e0e06; color: #fff; }
.taskbar > button { width: 29px; padding-top: 1px; border-bottom: 2px solid transparent; }
.taskbar > button svg { width: 12px; height: 12px; }
.taskbar .run { border-bottom-color: #7fbfe0; background-clip: content-box; border-left: 3px solid transparent; border-right: 3px solid transparent; }
.taskbar .lit { background: #45423f; background-clip: border-box; }
.people, .tray { display: flex; align-items: center; }
.people svg, .tray svg { fill: none; stroke: #fff; stroke-width: 1; }
.people { gap: 16px; margin-right: 12px; }
.avatar { width: 16px; height: 16px; border-radius: 50%; background: #8c8c8c; display: grid; place-items: center; }
.tray { gap: 5px; }
.tray svg { width: 10px; }
.tray svg.kbd { width: 14px; margin-left: 1px; }
.lang { align-self: center; width: 26px; text-align: center; font: 8px/12px "DejaVu Sans", sans-serif; }
.clock { display: flex; flex-direction: column; justify-content: center; align-items: center; width: 38px; font: 7px/11px "Noto Sans", sans-serif; }
.taskbar > .note { width: 33px; padding-right: 4px; }
```
FILE: app.js
```js
const count = 22;
const muxes = { 17: ["12456V", "1..."], 18: ["12456V", "1..."], 19: ["12283.7H", "541"], 20: ["12246H", "448"], 21: ["12246H", "447"] };
const icon = (id) => `<td class="ico"><svg><use href="#i-${id}"/></svg></td>`;
const box = (label, on, cls = "") => `<td class="ico"><input type="checkbox" aria-label="${label}" class="${cls}" ${on ? "checked" : ""}></td>`;
const cells = (...list) => list.map((v) => `<td>${v}</td>`).join("");

let html = "";
for (let i = 0; i < count; i++) {
  const missing = i === 6;
  const [mux, sid] = muxes[i] || ["12476H", "5"];
  html += "<tr>" + icon("play") + icon("info") + box("Enabled", !missing) +
    cells("", "", missing ? "Missing In PAT/SDT" : "Auto check enabled", 0) +
    box("Encrypted", false, "faint") +
    cells("Override disabled", "Hispasat 1D/1E_3...", mux, sid, 0, 0, 0, 0) +
    box("Ignore EPG", false) +
    cells("", 0, "Off", 0, 0, `<bdi>م</bdi> <bdi>${i === 9 ? "١:١٠" : "١٠:٣"}</bdi>...`, "<bdi>ص</bdi> <bdi>١:</bdi>...") +
    "</tr>";
}
document.getElementById("services").innerHTML = html;
```
